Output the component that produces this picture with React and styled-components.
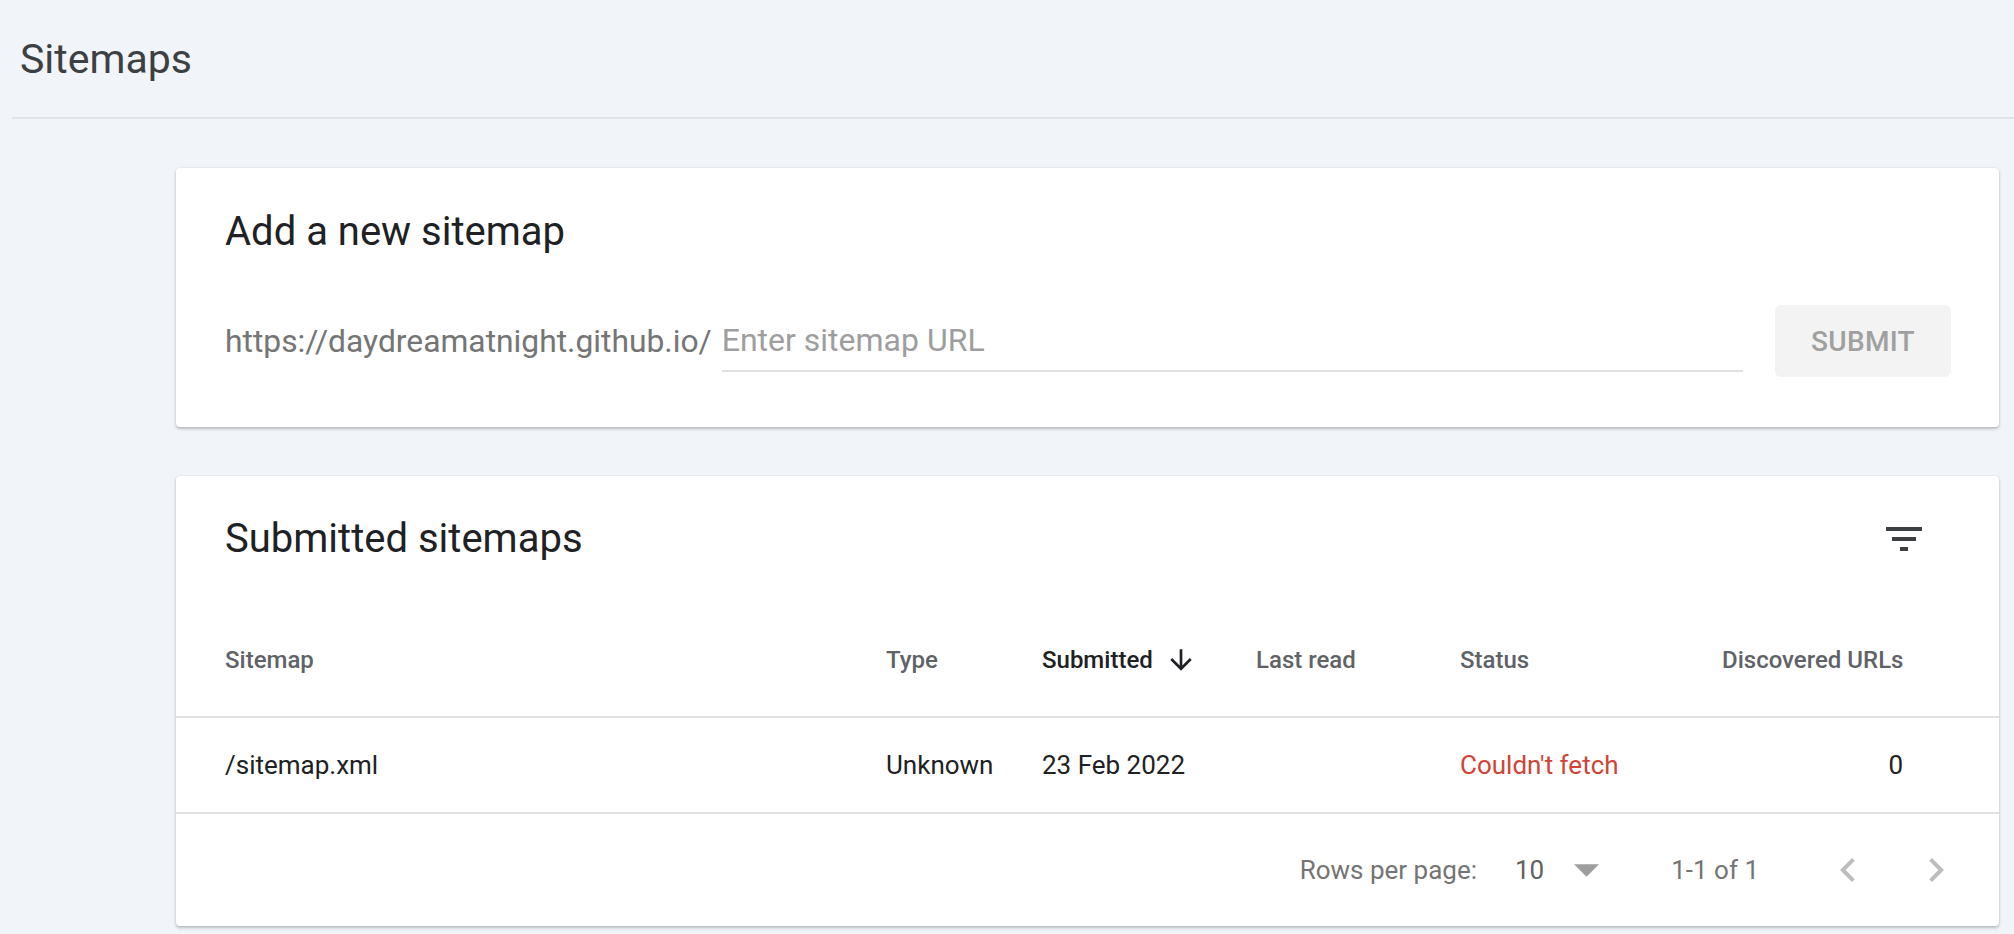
import React from 'react';
import styled, { createGlobalStyle } from 'styled-components';

const GlobalStyle = createGlobalStyle`
  html, body {
    margin: 0;
    padding: 0;
    background: #f1f4f9;
    font-family: Roboto, "Liberation Sans", Arial, sans-serif;
  }
  * { box-sizing: border-box; }
`

const Page = styled.div`
  min-height: 934px;
`
const TopBar = styled.div`
  height: 117px;
  display: flex;
  align-items: center;
  padding-left: 20px;
`
const PageTitle = styled.h1`
  margin: 0;
  font-size: 41px;
  font-weight: 400;
  color: #3c4043;
`
const Divider = styled.div`
  height: 2px;
  margin-left: 12px;
  background: #e2e4e6;
`
const Main = styled.div`
  padding: 49px 15px 0 176px;
  display: flex;
  flex-direction: column;
  gap: 49px;
`
const Card = styled.div`
  background: #fff;
  border-radius: 4px;
  box-shadow: 0 2px 3px rgba(60, 64, 67, 0.3), 0 0 2px rgba(60, 64, 67, 0.12);
`
const AddCard = styled(Card)`
  padding: 40px 48px 50px 49px;
`
const CardTitle = styled.h2`
  margin: 0;
  font-size: 40px;
  line-height: 48px;
  font-weight: 400;
  color: #202124;
`
const InputRow = styled.div`
  margin-top: 49px;
  height: 72px;
  display: flex;
  align-items: center;
`
const Prefix = styled.span`
  font-size: 31.8px;
  color: #757575;
  white-space: nowrap;
`
const Field = styled.input`
  flex: 1;
  margin-left: 10px;
  height: 62px;
  padding: 0;
  border: none;
  border-bottom: 2px solid #e0e0e0;
  outline: none;
  font-family: inherit;
  font-size: 32px;
  color: #202124;
  background: transparent;
  &::placeholder { color: #9e9e9e; }
`
const SubmitButton = styled.button`
  margin-left: 32px;
  width: 176px;
  height: 72px;
  border: none;
  border-radius: 6px;
  background: #f3f3f3;
  color: #a0a0a0;
  font-family: inherit;
  font-size: 28px;
  font-weight: 500;
  letter-spacing: 0.3px;
`
const ListCard = styled(Card)`
  padding-top: 39px;
`
const ListHeader = styled.div`
  display: flex;
  align-items: center;
  justify-content: space-between;
  height: 48px;
  padding: 0 71px 0 49px;
`
const IconButton = styled.div`
  width: 48px;
  height: 48px;
  display: flex;
  align-items: center;
  justify-content: center;
  color: ${p => p.color || '#3c4043'};
  svg { display: block; }
`
const Row = styled.div`
  display: grid;
  grid-template-columns: 661px 156px 214px 204px 262px 1fr;
  align-items: center;
  height: ${p => p.h}px;
  padding: 0 96px 0 49px;
  border-bottom: 2px solid #e0e0e0;
`
const HeadRow = styled(Row)`
  margin-top: 41px;
`
const HeadCell = styled.div`
  display: flex;
  align-items: center;
  justify-content: ${p => (p.right ? 'flex-end' : 'flex-start')};
  font-size: 24px;
  font-weight: 500;
  color: ${p => (p.active ? '#202124' : '#5f6368')};
  white-space: nowrap;
`
const SortIcon = styled.svg`
  margin-left: 12px;
`
const Cell = styled.div`
  font-size: 26px;
  color: ${p => p.color || '#202124'};
  text-align: ${p => (p.right ? 'right' : 'left')};
  white-space: nowrap;
`
const Footer = styled.div`
  height: 112px;
  display: flex;
  align-items: center;
  justify-content: flex-end;
  padding-right: 39px;
  font-size: 26px;
  color: #757575;
`
const RowsValue = styled.span`
  margin-left: 38px;
  color: #616161;
`
const DropArrow = styled.svg`
  margin-left: 30px;
  display: block;
`
const Range = styled.span`
  margin-left: 72px;
  margin-right: 65px;
`
const PagerGap = styled.div`
  width: 40px;
`

const FilterIcon = () => (
  <svg width="48" height="48" viewBox="0 0 24 24" fill="currentColor">
    <path d="M10 18h4v-2h-4v2zM3 6v2h18V6H3zm3 7h12v-2H6v2z" />
  </svg>
)

const ChevronLeft = () => (
  <svg width="48" height="48" viewBox="0 0 24 24" fill="currentColor">
    <path d="M15.41 7.41L14 6l-6 6 6 6 1.41-1.41L10.83 12z" />
  </svg>
)

const ChevronRight = () => (
  <svg width="48" height="48" viewBox="0 0 24 24" fill="currentColor">
    <path d="M10 6L8.59 7.41 13.17 12l-4.58 4.59L10 18l6-6z" />
  </svg>
)

const columns = [
  { label: 'Sitemap' },
  { label: 'Type' },
  { label: 'Submitted', active: true, sort: true },
  { label: 'Last read' },
  { label: 'Status' },
  { label: 'Discovered URLs', right: true },
]

const sitemaps = [
  { path: '/sitemap.xml', type: 'Unknown', submitted: '23 Feb 2022', lastRead: '', status: "Couldn't fetch", urls: 0 },
]

export default function App() {
  return (
    <Page>
      <GlobalStyle />
      <TopBar>
        <PageTitle>Sitemaps</PageTitle>
      </TopBar>
      <Divider />
      <Main>
        <AddCard>
          <CardTitle>Add a new sitemap</CardTitle>
          <InputRow>
            <Prefix>https://daydreamatnight.github.io/</Prefix>
            <Field placeholder="Enter sitemap URL" />
            <SubmitButton disabled>SUBMIT</SubmitButton>
          </InputRow>
        </AddCard>

        <ListCard>
          <ListHeader>
            <CardTitle>Submitted sitemaps</CardTitle>
            <IconButton>
              <FilterIcon />
            </IconButton>
          </ListHeader>
          <HeadRow h={114}>
            {columns.map(c => (
              <HeadCell key={c.label} active={c.active} right={c.right}>
                {c.label}
                {c.sort && (
                  <SortIcon width="32" height="32" viewBox="0 0 24 24" fill="#202124">
                    <path d="M20 12l-1.41-1.41L13 16.17V4h-2v12.17l-5.58-5.59L4 12l8 8 8-8z" />
                  </SortIcon>
                )}
              </HeadCell>
            ))}
          </HeadRow>
          {sitemaps.map(s => (
            <Row h={96} key={s.path}>
              <Cell>{s.path}</Cell>
              <Cell>{s.type}</Cell>
              <Cell>{s.submitted}</Cell>
              <Cell>{s.lastRead}</Cell>
              <Cell color="#d04437">{s.status}</Cell>
              <Cell right>{s.urls}</Cell>
            </Row>
          ))}
          <Footer>
            <span>Rows per page:</span>
            <RowsValue>10</RowsValue>
            <DropArrow width="25" height="13" viewBox="0 0 10 5" fill="#9e9e9e">
              <path d="M0 0l5 5 5-5z" />
            </DropArrow>
            <Range>1-1 of 1</Range>
            <IconButton color="#bdbdbd">
              <ChevronLeft />
            </IconButton>
            <PagerGap />
            <IconButton color="#bdbdbd">
              <ChevronRight />
            </IconButton>
          </Footer>
        </ListCard>
      </Main>
    </Page>
  )
}
